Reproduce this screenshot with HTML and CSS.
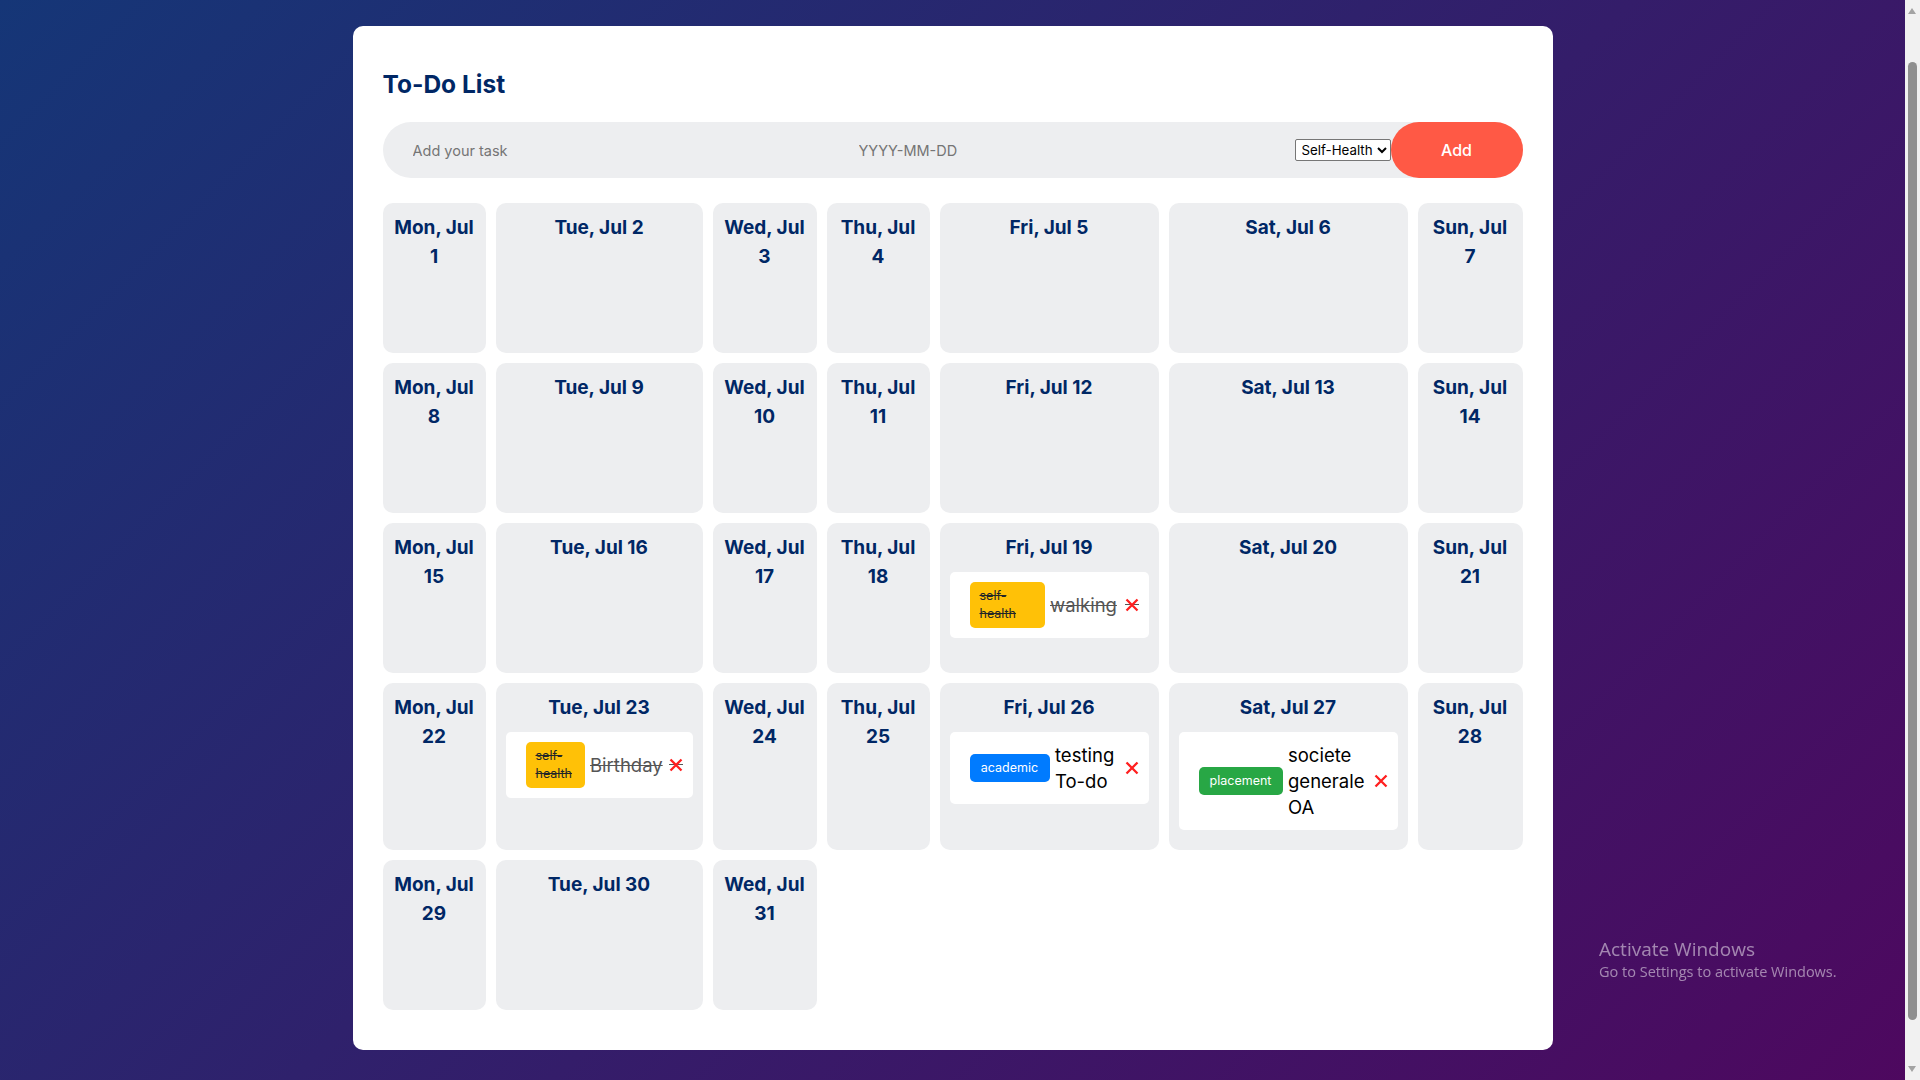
FILE: index.html
```html
<!DOCTYPE html>
<html lang="en">
<head>
<meta charset="utf-8">
<title>To-Do List</title>
<link rel="stylesheet" href="styles.css">
</head>
<body>
<div class="page">
  <div class="todo-app">
    <h2 class="title">To-Do List</h2>
    <div class="row">
      <input class="field" type="text" placeholder="Add your task">
      <input class="field" type="text" placeholder="YYYY-MM-DD">
      <select class="category">
        <option>Self-Health</option>
        <option>Academic</option>
        <option>Placement</option>
      </select>
      <button class="add-btn">Add</button>
    </div>
    <div class="calendar">
      <div class="day"><h3 class="day-label">Mon, Jul 1</h3></div>
      <div class="day"><h3 class="day-label">Tue, Jul 2</h3></div>
      <div class="day"><h3 class="day-label">Wed, Jul 3</h3></div>
      <div class="day"><h3 class="day-label">Thu, Jul 4</h3></div>
      <div class="day"><h3 class="day-label">Fri, Jul 5</h3></div>
      <div class="day"><h3 class="day-label">Sat, Jul 6</h3></div>
      <div class="day"><h3 class="day-label">Sun, Jul 7</h3></div>

      <div class="day"><h3 class="day-label">Mon, Jul 8</h3></div>
      <div class="day"><h3 class="day-label">Tue, Jul 9</h3></div>
      <div class="day"><h3 class="day-label">Wed, Jul 10</h3></div>
      <div class="day"><h3 class="day-label">Thu, Jul 11</h3></div>
      <div class="day"><h3 class="day-label">Fri, Jul 12</h3></div>
      <div class="day"><h3 class="day-label">Sat, Jul 13</h3></div>
      <div class="day"><h3 class="day-label">Sun, Jul 14</h3></div>

      <div class="day"><h3 class="day-label">Mon, Jul 15</h3></div>
      <div class="day"><h3 class="day-label">Tue, Jul 16</h3></div>
      <div class="day"><h3 class="day-label">Wed, Jul 17</h3></div>
      <div class="day"><h3 class="day-label">Thu, Jul 18</h3></div>
      <div class="day">
        <h3 class="day-label">Fri, Jul 19</h3>
        <ul class="tasks">
          <li class="task done">
            <span class="tag tag-self tag-self-lg">self-health</span>
            <span class="task-text">walking</span>
            <svg class="delete" viewBox="0 0 14 14"><path d="M1.5 1.5L12.5 12.5M12.5 1.5L1.5 12.5" stroke="#ff1f1f" stroke-width="2.3" fill="none"/></svg>
          </li>
        </ul>
      </div>
      <div class="day"><h3 class="day-label">Sat, Jul 20</h3></div>
      <div class="day"><h3 class="day-label">Sun, Jul 21</h3></div>

      <div class="day"><h3 class="day-label">Mon, Jul 22</h3></div>
      <div class="day">
        <h3 class="day-label">Tue, Jul 23</h3>
        <ul class="tasks">
          <li class="task done">
            <span class="tag tag-self tag-self-sm">self-health</span>
            <span class="task-text">Birthday</span>
            <svg class="delete" viewBox="0 0 14 14"><path d="M1.5 1.5L12.5 12.5M12.5 1.5L1.5 12.5" stroke="#ff1f1f" stroke-width="2.3" fill="none"/></svg>
          </li>
        </ul>
      </div>
      <div class="day"><h3 class="day-label">Wed, Jul 24</h3></div>
      <div class="day"><h3 class="day-label">Thu, Jul 25</h3></div>
      <div class="day">
        <h3 class="day-label">Fri, Jul 26</h3>
        <ul class="tasks">
          <li class="task">
            <span class="tag tag-academic">academic</span>
            <span class="task-text">testing To-do</span>
            <svg class="delete" viewBox="0 0 14 14"><path d="M1.5 1.5L12.5 12.5M12.5 1.5L1.5 12.5" stroke="#ff1f1f" stroke-width="2.3" fill="none"/></svg>
          </li>
        </ul>
      </div>
      <div class="day">
        <h3 class="day-label">Sat, Jul 27</h3>
        <ul class="tasks">
          <li class="task">
            <span class="tag tag-placement">placement</span>
            <span class="task-text">societe generale OA</span>
            <svg class="delete" viewBox="0 0 14 14"><path d="M1.5 1.5L12.5 12.5M12.5 1.5L1.5 12.5" stroke="#ff1f1f" stroke-width="2.3" fill="none"/></svg>
          </li>
        </ul>
      </div>
      <div class="day"><h3 class="day-label">Sun, Jul 28</h3></div>

      <div class="day"><h3 class="day-label">Mon, Jul 29</h3></div>
      <div class="day"><h3 class="day-label">Tue, Jul 30</h3></div>
      <div class="day"><h3 class="day-label">Wed, Jul 31</h3></div>
    </div>
  </div>
</div>

<div class="scrollbar">
  <span class="arrow arrow-up"></span>
  <span class="thumb"></span>
  <span class="arrow arrow-down"></span>
</div>

<div class="watermark">
  <div class="wm-title">Activate Windows</div>
  <div class="wm-sub">Go to Settings to activate Windows.</div>
</div>
</body>
</html>
```

FILE: styles.css
```css
* {
  box-sizing: border-box;
}

html,
body {
  margin: 0;
  padding: 0;
  height: 100%;
  overflow: hidden;
}

body {
  width: 1920px;
  height: 1080px;
  background: linear-gradient(135deg, #153677, #4e085f);
  font-family: Inter, "Open Sans", sans-serif;
}

.page {
  width: 1905px;
  padding-top: 26px;
}

.todo-app {
  width: 1200px;
  margin: 0 auto;
  background: #fff;
  border-radius: 10px;
  padding: 40px 30px 40px;
}

.title {
  margin: 0 0 20px;
  font-size: 24.5px;
  line-height: 36px;
  font-weight: 700;
  color: #002765;
}

.row {
  display: flex;
  align-items: center;
  height: 56px;
  background: #edeef0;
  border-radius: 30px;
  padding-left: 20px;
  margin-bottom: 25px;
}

.field {
  flex: 1;
  min-width: 0;
  border: none;
  outline: none;
  background: transparent;
  padding: 10px;
  font-family: inherit;
  font-size: 14.5px;
  color: #000;
}

.field::placeholder {
  color: #757575;
}

.category {
  flex: none;
  width: 96px;
  height: 22px;
  font-family: inherit;
  font-size: 13.3px;
  color: #000;
  background: #fff;
  border: 1px solid #767676;
  border-radius: 2px;
  padding: 0 0 0 2px;
}

.add-btn {
  flex: none;
  width: 132px;
  height: 56px;
  border: none;
  border-radius: 40px;
  background: #ff5945;
  color: #fff;
  font-family: inherit;
  font-size: 16px;
  font-weight: 500;
}

.calendar {
  display: grid;
  grid-template-columns: 103px 207px 104px 103px 219px 239px 1fr;
  gap: 10px;
}

.day {
  min-height: 150px;
  padding: 10px;
  background: #edeef0;
  border-radius: 10px;
}

.day-label {
  margin: 1px 0 0;
  font-size: 19px;
  line-height: 28.8px;
  font-weight: 700;
  color: #002765;
  text-align: center;
}

.tasks {
  list-style: none;
  margin: 0;
  padding: 0;
}

.task {
  display: flex;
  align-items: center;
  margin: 9px 0 10px;
  padding: 10px 10px 10px 20px;
  background: #fff;
  border-radius: 5px;
}

.tag {
  flex: none;
  margin-right: 5.5px;
  padding: 5px 10px;
  border-radius: 5px;
  font-size: 12.5px;
  line-height: 18px;
}

.tag-self {
  background: #ffc107;
  color: #212529;
}

.tag-self-lg {
  width: 75px;
}

.tag-self-sm {
  width: 59px;
}

.tag-academic {
  width: 80px;
  text-align: center;
  background: #007bff;
  color: #fff;
}

.tag-placement {
  width: 84px;
  text-align: center;
  background: #28a745;
  color: #fff;
}

.task-text {
  flex: 1;
  min-width: 0;
  font-size: 18.5px;
  line-height: 26px;
  color: #000;
}

.delete {
  flex: none;
  width: 14px;
  height: 14px;
  margin-left: 6px;
}

.task.done .tag,
.task.done .task-text {
  text-decoration: line-through;
}

.task.done .task-text {
  color: #555;
}

.task.done .delete {
  background: linear-gradient(#555, #555) no-repeat 0 50% / 100% 1px;
}

.scrollbar {
  position: fixed;
  top: 0;
  right: 0;
  width: 15px;
  height: 1080px;
  background: #f1f1f1;
}

.thumb {
  position: absolute;
  left: 3px;
  top: 62px;
  width: 9px;
  height: 958px;
  border-radius: 5px;
  background: #8f8f8f;
}

.arrow {
  position: absolute;
  left: 3px;
  width: 0;
  height: 0;
  border-left: 4.5px solid transparent;
  border-right: 4.5px solid transparent;
}

.arrow-up {
  top: 8px;
  border-bottom: 6px solid #a3a3a3;
}

.arrow-down {
  top: 1066px;
  border-top: 6px solid #a3a3a3;
}

.watermark {
  position: fixed;
  left: 1599px;
  top: 936px;
  color: rgba(255, 255, 255, 0.5);
  font-family: "Open Sans", "Noto Sans", sans-serif;
}

.wm-title {
  font-size: 19px;
  line-height: 26px;
}

.wm-sub {
  font-size: 14.5px;
  line-height: 20px;
}
```
